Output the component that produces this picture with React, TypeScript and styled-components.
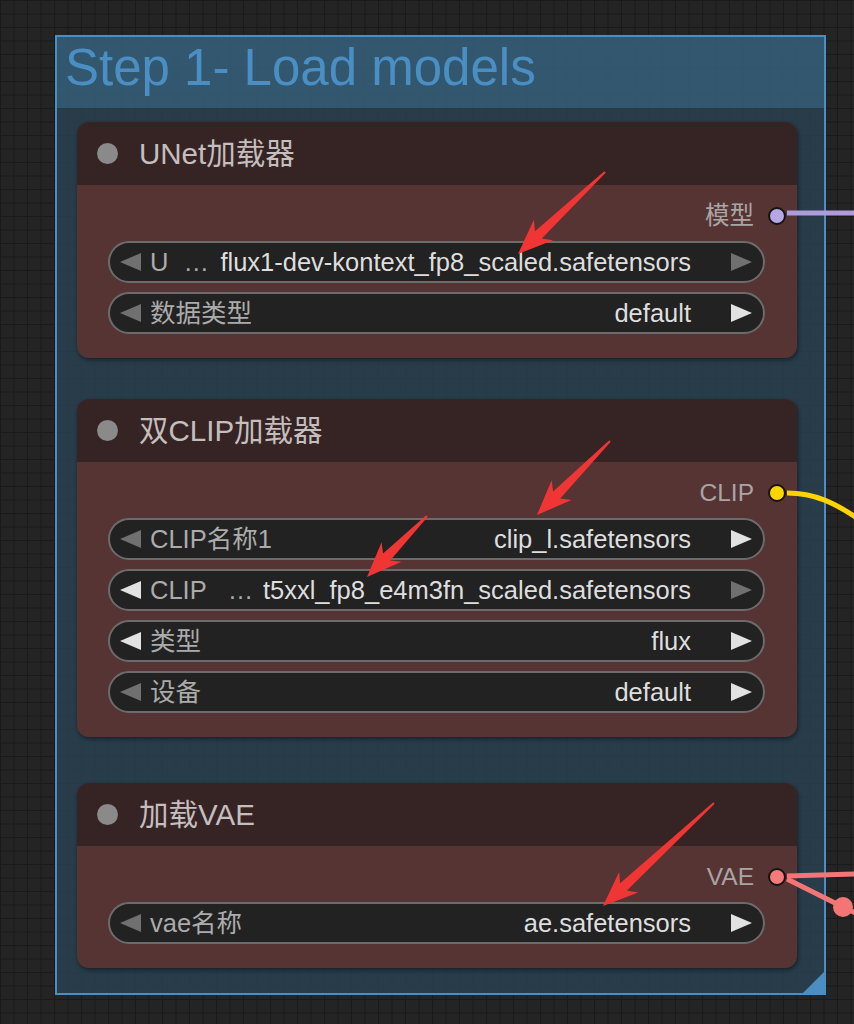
import React from "react"
import styled, { createGlobalStyle, css } from "styled-components"

const GlobalStyle = createGlobalStyle`
  html,
  body {
    margin: 0;
    padding: 0;
    background: #232323;
  }
  body {
    font-family: "Liberation Sans", "Noto Sans CJK SC", sans-serif;
  }
`

const Canvas = styled.div`
  position: relative;
  width: 854px;
  height: 1024px;
  overflow: hidden;
  box-sizing: border-box;
  padding: 35px 0 0 55px;
  background-color: #242424;
  background-image: linear-gradient(#1a1a1a 1px, transparent 1px),
    linear-gradient(90deg, #1a1a1a 1px, transparent 1px);
  background-size: 13.5px 13.5px;
`

const Group = styled.section`
  position: relative;
  width: 771px;
  box-sizing: border-box;
  border: 2px solid #4b8ec3;
  /* resize handle */
  &::after {
    content: "";
    position: absolute;
    right: 0;
    bottom: 0;
    border-left: 21px solid transparent;
    border-bottom: 21px solid #4b8ec3;
  }
`

const GroupTitle = styled.h1`
  margin: 0;
  height: 71px;
  box-sizing: border-box;
  padding: 2px 0 0 8px;
  font-size: 51px;
  font-weight: 400;
  line-height: 58px;
  color: #4a8fc4;
  background: rgba(55, 95, 123, 0.88);
  white-space: nowrap;
`

const GroupBody = styled.div`
  display: flex;
  flex-direction: column;
  padding: 14px 0 25px 20px;
  background: rgba(41, 65, 81, 0.85);
`

const Node = styled.div<{ $offset?: number }>`
  width: 720px;
  margin-top: ${(p) => p.$offset ?? 0}px;
  border-radius: 12px;
  background: #563434;
  box-shadow: 1px 2px 4px rgba(0, 0, 0, 0.45);
`

const NodeHeader = styled.div`
  display: flex;
  align-items: center;
  gap: 21px;
  height: 63px;
  padding-left: 20px;
  border-radius: 12px 12px 0 0;
  background: #362424;
`

const HeaderDot = styled.span`
  width: 21px;
  height: 21px;
  border-radius: 50%;
  background: #8a8a8a;
`

const NodeTitle = styled.span`
  font-size: 29.5px;
  line-height: 30px;
  color: #c4bebe;
  white-space: nowrap;
`

const NodeBody = styled.div`
  display: flex;
  flex-direction: column;
  padding: 18px 32px 24px 31px;
`

const OutputRow = styled.div`
  display: flex;
  align-items: center;
  justify-content: flex-end;
  gap: 14px;
  height: 26px;
  margin-right: -21px;
  margin-bottom: 12px;
`

const OutputLabel = styled.span`
  font-size: 24.5px;
  line-height: 26px;
  color: #aaa4a4;
`

const SlotDot = styled.span<{ $color: string }>`
  width: 18px;
  height: 18px;
  box-sizing: border-box;
  border-radius: 50%;
  border: 2px solid #141414;
  background: ${(p) => p.$color};
`

const WidgetList = styled.div`
  display: flex;
  flex-direction: column;
  gap: 9px;
`

const Widget = styled.div`
  display: flex;
  align-items: center;
  height: 42px;
  box-sizing: border-box;
  padding: 0 11px 0 10px;
  border: 2px solid #6c6c6c;
  border-radius: 21px;
  background: #222222;
  font-size: 25.5px;
  line-height: 28px;
  white-space: nowrap;
`

const Arrow = styled.span<{ $dir: "left" | "right"; $dim?: boolean }>`
  width: 0;
  height: 0;
  flex: none;
  border-top: 9.5px solid transparent;
  border-bottom: 9.5px solid transparent;
  ${(p) =>
    p.$dir === "left"
      ? css`
          border-right: 21px solid ${p.$dim ? "#707070" : "#e2e2e2"};
        `
      : css`
          border-left: 21px solid ${p.$dim ? "#707070" : "#e2e2e2"};
        `}
`

const Label = styled.span`
  margin-left: 9px;
  color: #ababab;
`

const Ellipsis = styled.span<{ $gap: number }>`
  margin-left: ${(p) => p.$gap}px;
  color: #ababab;
`

const Value = styled.span`
  margin-left: auto;
  margin-right: 40px;
  color: #dedede;
`

const Overlay = styled.svg`
  position: absolute;
  top: 0;
  left: 0;
  pointer-events: none;
`

interface WidgetData {
  label: string
  value: string
  leftDim?: boolean
  rightDim?: boolean
  cut?: number
}

interface NodeData {
  title: string
  output: string
  color: string
  offset: number
  widgets: WidgetData[]
}

const nodes: NodeData[] = [
  {
    title: "UNet加载器",
    output: "模型",
    color: "#b6a6e3",
    offset: 0,
    widgets: [
      {
        label: "U",
        value: "flux1-dev-kontext_fp8_scaled.safetensors",
        leftDim: true,
        rightDim: true,
        cut: 15,
      },
      { label: "数据类型", value: "default", leftDim: true },
    ],
  },
  {
    title: "双CLIP加载器",
    output: "CLIP",
    color: "#ffd500",
    offset: 41,
    widgets: [
      { label: "CLIP名称1", value: "clip_l.safetensors", leftDim: true },
      {
        label: "CLIP",
        value: "t5xxl_fp8_e4m3fn_scaled.safetensors",
        rightDim: true,
        cut: 21,
      },
      { label: "类型", value: "flux" },
      { label: "设备", value: "default", leftDim: true },
    ],
  },
  {
    title: "加载VAE",
    output: "VAE",
    color: "#f77a7a",
    offset: 46,
    widgets: [{ label: "vae名称", value: "ae.safetensors", leftDim: true }],
  },
]

// red callout arrow, thin tail widening to a swept head
const calloutPoints = (x1: number, y1: number, x2: number, y2: number) => {
  const dx = x2 - x1
  const dy = y2 - y1
  const len = Math.hypot(dx, dy)
  const ux = dx / len
  const uy = dy / len
  const local = [
    [len, 0],
    [len - 35, 14],
    [len - 28, 5],
    [0, 1],
    [0, -1],
    [len - 28, -5],
    [len - 35, -14],
  ]
  return local
    .map(([a, b]) => `${x1 + ux * a - uy * b},${y1 + uy * a + ux * b}`)
    .join(" ")
}

const callouts = [
  [605, 172, 518, 254],
  [610, 441, 537, 515],
  [427, 516, 367, 577],
  [714, 803, 603, 906],
]

export default function App() {
  return (
    <Canvas>
      <GlobalStyle />
      <Group>
        <GroupTitle>Step 1- Load models</GroupTitle>
        <GroupBody>
          {nodes.map((n) => (
            <Node key={n.title} $offset={n.offset}>
              <NodeHeader>
                <HeaderDot />
                <NodeTitle>{n.title}</NodeTitle>
              </NodeHeader>
              <NodeBody>
                <OutputRow>
                  <OutputLabel>{n.output}</OutputLabel>
                  <SlotDot $color={n.color} />
                </OutputRow>
                <WidgetList>
                  {n.widgets.map((w) => (
                    <Widget key={w.label + w.value}>
                      <Arrow $dir="left" $dim={w.leftDim} />
                      <Label>{w.label}</Label>
                      {w.cut && <Ellipsis $gap={w.cut}>…</Ellipsis>}
                      <Value>{w.value}</Value>
                      <Arrow $dir="right" $dim={w.rightDim} />
                    </Widget>
                  ))}
                </WidgetList>
              </NodeBody>
            </Node>
          ))}
        </GroupBody>
      </Group>
      <Overlay width={854} height={1024} viewBox="0 0 854 1024">
        <path d="M787 213 L856 213" stroke="#ad9bdc" strokeWidth={5} fill="none" />
        <path
          d="M787 493 C 815 493, 835 503, 860 520"
          stroke="#ffd400"
          strokeWidth={5}
          fill="none"
        />
        <path d="M787 876 L856 874" stroke="#f47575" strokeWidth={5} fill="none" />
        <path
          d="M787 879 L843 907 L860 915"
          stroke="#f47575"
          strokeWidth={5}
          fill="none"
        />
        <circle cx={843} cy={907} r={10} fill="#f47575" />
        {callouts.map(([x1, y1, x2, y2]) => (
          <polygon
            key={`${x1}-${y1}`}
            points={calloutPoints(x1, y1, x2, y2)}
            fill="#f03535"
          />
        ))}
      </Overlay>
    </Canvas>
  )
}
